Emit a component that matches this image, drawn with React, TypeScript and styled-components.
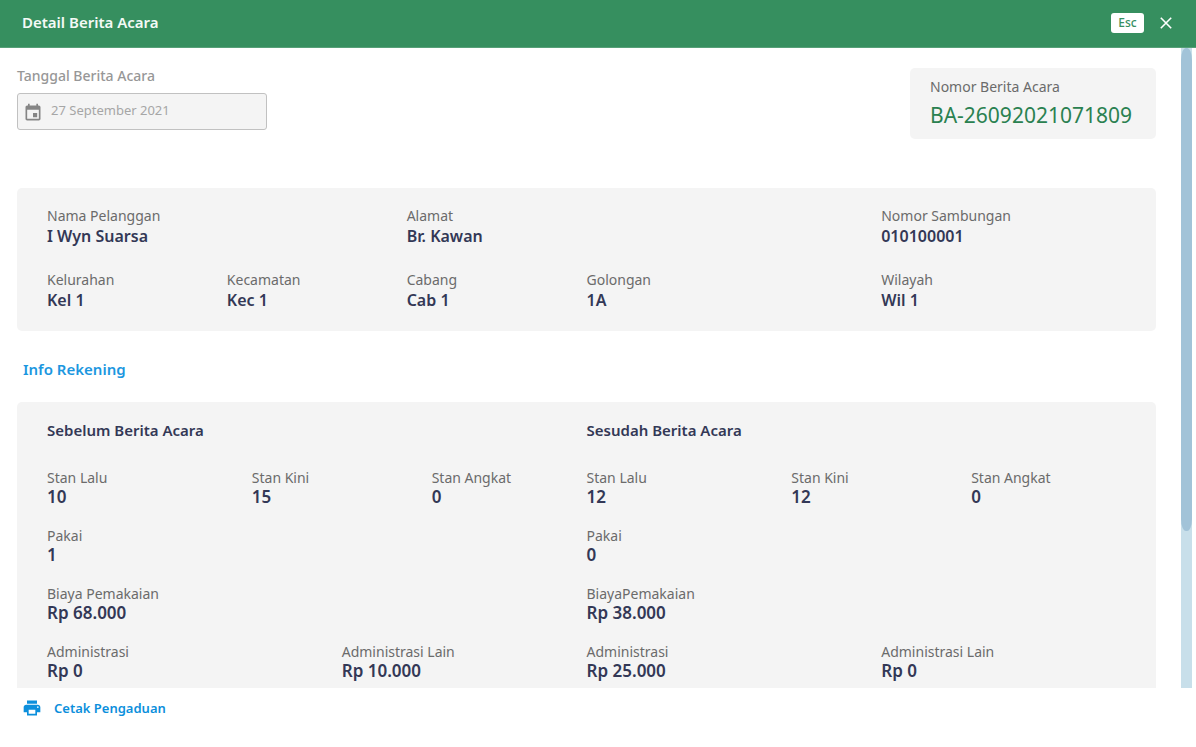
import React from "react";
import styled, { createGlobalStyle } from "styled-components";

const GlobalStyle = createGlobalStyle`
  *, *::before, *::after { box-sizing: border-box; }
  body {
    margin: 0;
    background: #ffffff;
    font-family: "Noto Sans", "Open Sans", sans-serif;
    font-size: 14px;
    line-height: 20px;
    color: #6b6b6b;
  }
  button, input { font-family: inherit; }
`;

const Dialog = styled.div`
  display: flex;
  flex-direction: column;
  height: 100vh;
`;

const Header = styled.header`
  display: flex;
  align-items: center;
  justify-content: space-between;
  flex: none;
  height: 48px;
  padding: 0 20px 2px 22px;
  background: #368f5f;
  border-bottom: 1px solid #57a078;
`;

const Title = styled.h1`
  margin: 0;
  padding-bottom: 2px;
  font-size: 15px;
  line-height: 20px;
  font-weight: 600;
  color: #f4faf6;
`;

const HeaderActions = styled.div`
  display: flex;
  align-items: center;
  gap: 12px;
`;

const EscButton = styled.button`
  width: 33px;
  height: 20px;
  padding: 0;
  border: 0;
  border-radius: 3px;
  background: #ffffff;
  color: #368f5f;
  font-size: 12px;
  line-height: 20px;
  font-weight: 500;
`;

const CloseButton = styled.button`
  display: flex;
  align-items: center;
  justify-content: center;
  width: 20px;
  height: 20px;
  padding: 0;
  border: 0;
  background: none;
  color: #ffffff;
`;

const Body = styled.div`
  display: flex;
  flex: 1;
  min-height: 0;
  padding-right: 4px;
`;

const Scroller = styled.main`
  flex: 1;
  min-width: 0;
  overflow-y: auto;
  scrollbar-width: none;
  padding: 20px 25px 20px 17px;
`;

const ScrollTrack = styled.div`
  flex: none;
  width: 11px;
  background: #c8dfea;
`;

const ScrollThumb = styled.div`
  height: 75.5%;
  min-height: 24px;
  border-radius: 5px / 12px;
  background: #a2c3d8;
`;

const TopRow = styled.div`
  display: flex;
  align-items: flex-start;
  justify-content: space-between;
  margin-bottom: 49px;
`;

const DateField = styled.div`
  display: flex;
  flex-direction: column;
  gap: 7px;
  width: 250px;
  margin-top: -2px;
`;

const DateLabel = styled.label`
  font-weight: 500;
  color: #979797;
`;

const DateBox = styled.div`
  display: flex;
  align-items: center;
  gap: 8px;
  height: 37px;
  padding: 0 5px;
  border: 1px solid #c1c1c1;
  border-radius: 3px;
  background: #f4f4f4;
  color: #858585;

  svg { flex: none; margin-top: 2px; }
`;

const DateInput = styled.input`
  flex: 1;
  min-width: 0;
  height: 24px;
  padding: 0 0 4px;
  border: 0;
  background: none;
  font-size: 13px;
  line-height: 20px;
  color: #a6a6a6;
  -webkit-text-fill-color: #a6a6a6;
  opacity: 1;
`;

const NumberBox = styled.div`
  min-width: 246px;
  padding: 9px 20px 10px;
  border-radius: 5px;
  background: #f4f4f4;
`;

const NumberValue = styled.div`
  padding-top: 4px;
  font-size: 21px;
  line-height: 28px;
  color: #2a8150;
`;

const Card = styled.section`
  padding: 18px 30px 21px;
  border-radius: 5px;
  background: #f4f4f4;
`;

const FieldList = styled.dl<{ $columns: string; $gap: number }>`
  display: grid;
  grid-template-columns: ${(p) => p.$columns};
  row-gap: ${(p) => p.$gap}px;
  margin: 0;
`;

const FieldCell = styled.div<{ $span: number }>`
  grid-column: span ${(p) => p.$span};
  min-width: 0;
`;

const FieldLabel = styled.dt`
  font-size: 14px;
  line-height: 20px;
`;

const FieldValue = styled.dd<{ $large: boolean }>`
  margin: 0;
  padding-bottom: ${(p) => (p.$large ? 2 : 0)}px;
  font-size: ${(p) => (p.$large ? 17 : 16)}px;
  line-height: ${(p) => (p.$large ? 18 : 20)}px;
  font-weight: 600;
  color: #333856;
`;

const SectionTitle = styled.h2`
  margin: 28px 6px 23px;
  font-size: 15px;
  line-height: 20px;
  font-weight: 600;
  color: #1c97df;
`;

const Comparison = styled.div`
  display: grid;
  grid-template-columns: 1fr 1fr;
`;

const PanelTitle = styled.h3`
  margin: 0 0 28px;
  font-size: 15px;
  line-height: 20px;
  font-weight: 600;
  color: #333856;
`;

const Footer = styled.footer`
  flex: none;
  height: 59px;
  padding: 10px 22px;
`;

const PrintButton = styled.button`
  display: flex;
  align-items: center;
  gap: 12px;
  padding: 0;
  border: 0;
  background: none;
  color: #0c8fdc;
  font-size: 13px;
  line-height: 20px;
  font-weight: 600;
`;

type FieldData = { label: string; value: string; span: number };

const customer: FieldData[] = [
  { label: "Nama Pelanggan", value: "I Wyn Suarsa", span: 2 },
  { label: "Alamat", value: "Br. Kawan", span: 2 },
  { label: "Nomor Sambungan", value: "010100001", span: 1 },
  { label: "Kelurahan", value: "Kel 1", span: 1 },
  { label: "Kecamatan", value: "Kec 1", span: 1 },
  { label: "Cabang", value: "Cab 1", span: 1 },
  { label: "Golongan", value: "1A", span: 1 },
  { label: "Wilayah", value: "Wil 1", span: 1 },
];

const before: FieldData[] = [
  { label: "Stan Lalu", value: "10", span: 1 },
  { label: "Stan Kini", value: "15", span: 2 },
  { label: "Stan Angkat", value: "0", span: 1 },
  { label: "Pakai", value: "1", span: 4 },
  { label: "Biaya Pemakaian", value: "Rp 68.000", span: 4 },
  { label: "Administrasi", value: "Rp 0", span: 2 },
  { label: "Administrasi Lain", value: "Rp 10.000", span: 2 },
];

const after: FieldData[] = [
  { label: "Stan Lalu", value: "12", span: 1 },
  { label: "Stan Kini", value: "12", span: 2 },
  { label: "Stan Angkat", value: "0", span: 1 },
  { label: "Pakai", value: "0", span: 4 },
  { label: "BiayaPemakaian", value: "Rp 38.000", span: 4 },
  { label: "Administrasi", value: "Rp 25.000", span: 2 },
  { label: "Administrasi Lain", value: "Rp 0", span: 2 },
];

type FieldsProps = { items: FieldData[]; columns: string; gap: number; large?: boolean };

function Fields({ items, columns, gap, large = false }: FieldsProps) {
  return (
    <FieldList $columns={columns} $gap={gap}>
      {items.map((f) => (
        <FieldCell key={f.label} $span={f.span}>
          <FieldLabel>{f.label}</FieldLabel>
          <FieldValue $large={large}>{f.value}</FieldValue>
        </FieldCell>
      ))}
    </FieldList>
  );
}

const customerColumns = "180fr 180fr 180fr 295fr 245fr";
const billColumns = "205fr 90fr 90fr 155fr";

export default function App() {
  return (
    <>
      <GlobalStyle />
      <Dialog role="dialog" aria-labelledby="dialog-title">
        <Header>
          <Title id="dialog-title">Detail Berita Acara</Title>
          <HeaderActions>
            <EscButton type="button">Esc</EscButton>
            <CloseButton type="button" aria-label="Tutup">
              <svg width="12" height="12" viewBox="0 0 12 12" fill="none" stroke="currentColor" strokeWidth="1.6">
                <path d="M0.8 0.8 11.2 11.2M11.2 0.8 0.8 11.2" />
              </svg>
            </CloseButton>
          </HeaderActions>
        </Header>
        <Body>
          <Scroller>
            <TopRow>
              <DateField>
                <DateLabel htmlFor="tanggal">Tanggal Berita Acara</DateLabel>
                <DateBox>
                  <svg width="20" height="20" viewBox="0 0 24 24" fill="currentColor" aria-hidden="true">
                    <path d="M17 12h-5v5h5v-5zM16 1v2H8V1H6v2H5c-1.11 0-1.99.9-1.99 2L3 19c0 1.1.89 2 2 2h14c1.1 0 2-.9 2-2V5c0-1.1-.9-2-2-2h-1V1h-2zm3 18H5V8h14v11z" />
                  </svg>
                  <DateInput id="tanggal" type="text" defaultValue="27 September 2021" disabled />
                </DateBox>
              </DateField>
              <NumberBox>
                <div>Nomor Berita Acara</div>
                <NumberValue>BA-26092021071809</NumberValue>
              </NumberBox>
            </TopRow>
            <Card>
              <Fields items={customer} columns={customerColumns} gap={24} />
            </Card>
            <SectionTitle>Info Rekening</SectionTitle>
            <Card>
              <Comparison>
                <div>
                  <PanelTitle>Sebelum Berita Acara</PanelTitle>
                  <Fields items={before} columns={billColumns} gap={18} large />
                </div>
                <div>
                  <PanelTitle>Sesudah Berita Acara</PanelTitle>
                  <Fields items={after} columns={billColumns} gap={18} large />
                </div>
              </Comparison>
            </Card>
          </Scroller>
          <ScrollTrack>
            <ScrollThumb />
          </ScrollTrack>
        </Body>
        <Footer>
          <PrintButton type="button">
            <svg width="20" height="20" viewBox="0 0 24 24" fill="currentColor" aria-hidden="true">
              <path d="M19 8H5c-1.66 0-3 1.34-3 3v6h4v4h12v-4h4v-6c0-1.66-1.34-3-3-3zm-3 11H8v-5h8v5zm3-7c-.55 0-1-.45-1-1s.45-1 1-1 1 .45 1 1-.45 1-1 1zm-1-9H6v4h12V3z" />
            </svg>
            Cetak Pengaduan
          </PrintButton>
        </Footer>
      </Dialog>
    </>
  );
}
